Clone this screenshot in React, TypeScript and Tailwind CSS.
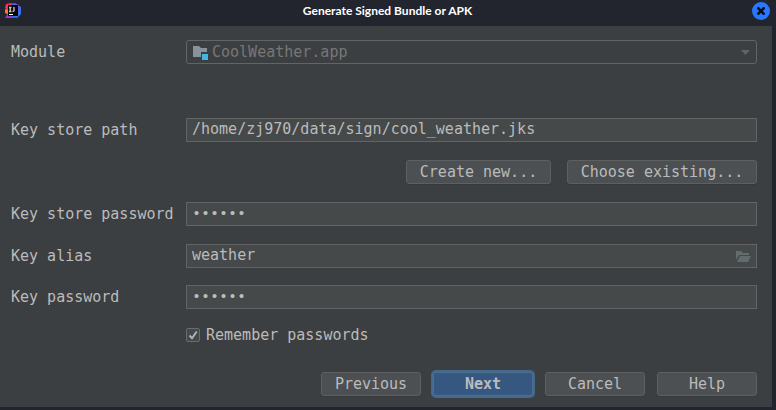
import type { ReactNode } from "react";

const fieldBase =
  "block h-6 w-full border border-[#646464] bg-[#45494a] px-[5px] text-[15px] leading-5 text-[#bbbbbb] outline-none";
const textField = `${fieldBase} pb-[2px]`;
const passwordField = `${fieldBase} font-['Liberation_Mono',monospace]`;

function Row({ id, label, children }: { id: string; label: string; children: ReactNode }) {
  return (
    <>
      <label htmlFor={id} className="text-[15px] leading-6 whitespace-pre">
        {label}
      </label>
      <div className="relative">{children}</div>
    </>
  );
}

function Button({ children, className }: { children: ReactNode; className: string }) {
  return (
    <button
      type="button"
      className={`h-6 rounded-[3px] border border-[#5e6060] bg-[#4c5052] text-[15px] leading-5 shadow-[0_1px_0_#36393b] ${className}`}
    >
      {children}
    </button>
  );
}

function Logo() {
  return (
    <svg className="size-4" viewBox="0 0 16 16" aria-hidden="true">
      <path d="M1 1 6 0 9 2 4 8 0 5Z" fill="#fc2b62" />
      <path d="M0 6 4 7 4 12 0 10Z" fill="#f77a29" />
      <path d="M0 15 3 10 12 14 6 15Z" fill="#9a35c4" />
      <path d="M6 1 10 0 16 4 16 11 12 15 6 14Z" fill="#3572f0" />
      <path d="M8 1 12 1 15 4 14 8Z" fill="#7155dc" />
      <rect x="3" y="2" width="10" height="11" fill="#080808" />
      <path d="M4 4.5h2.5M5.2 4.5v4M4 8.5h2.5M9 4v3.5q0 1-1.5 1" fill="none" stroke="#c4c4c4" strokeWidth="1.4" />
      <path d="M4 11.5h4" stroke="#fff" />
    </svg>
  );
}

export default function App() {
  return (
    <div className="flex min-h-screen flex-col bg-[#22252e] text-[#bbbbbb]">
      <header className="grid h-[26px] grid-cols-[1fr_auto_1fr] items-center pr-[6px] pl-[5px]">
        <div className="pb-1">
          <Logo />
        </div>
        <h1 className="pb-1 font-['Lato','Noto_Sans',sans-serif] text-[12px] leading-4 font-bold text-white">
          Generate Signed Bundle or APK
        </h1>
        <button
          type="button"
          aria-label="Close"
          className="mb-1 flex size-[18px] items-center justify-center justify-self-end rounded-full bg-[#2777ff]"
        >
          <svg className="size-2" viewBox="0 0 8 8" aria-hidden="true">
            <path d="M.5 .5 7.5 7.5M7.5 .5 .5 7.5" stroke="#0b0d14" strokeWidth="2.6" />
          </svg>
        </button>
      </header>

      <form className="mr-1 mb-[3px] flex grow flex-col bg-[#3c3f41] pt-[14px] pr-[15px] pb-[11px] pl-[11px] font-['DejaVu_Sans_Mono',monospace]">
        <div className="grid grid-cols-[175px_1fr]">
          <Row id="module" label="Module">
            <select
              id="module"
              disabled
              className="block h-6 w-full appearance-none rounded-[3px] border border-[#646464] bg-[#3c3f41] pl-[25px] text-[15px] leading-5 text-[#777777] opacity-100"
            >
              <option>CoolWeather.app</option>
            </select>
            <svg className="absolute top-[5px] left-[7px] h-[15px] w-4" viewBox="0 0 16 15" aria-hidden="true">
              <path d="M0 1h6l2 2h6v4H8v5H0Z" fill="#87939a" />
              <path d="M9 9h6v6H9Z" fill="#40b6e0" />
            </svg>
            <svg className="absolute top-[10px] right-[7px] h-[5px] w-[9px]" viewBox="0 0 9 5" aria-hidden="true">
              <path d="M0 0h9L4.5 5Z" fill="#616365" />
            </svg>
          </Row>
        </div>

        <div className="mt-[54px] grid grid-cols-[175px_1fr]">
          <Row id="path" label="Key store path">
            <input id="path" type="text" defaultValue="/home/zj970/data/sign/cool_weather.jks" className={textField} />
          </Row>
        </div>

        <div className="mt-[18px] flex justify-end gap-4">
          <Button className="w-[145px]">Create new...</Button>
          <Button className="w-[190px]">Choose existing...</Button>
        </div>

        <div className="mt-[18px] grid grid-cols-[175px_1fr]">
          <Row id="store-password" label="Key store password">
            <input id="store-password" type="password" defaultValue="secret" className={passwordField} />
          </Row>
        </div>

        <div className="mt-[18px] grid grid-cols-[175px_1fr] gap-y-[17px]">
          <Row id="alias" label="Key alias">
            <input id="alias" type="text" defaultValue="weather" className={textField} />
            <button type="button" aria-label="Browse" className="absolute top-[7px] right-[6px]">
              <svg className="h-[11px] w-[15px]" viewBox="0 0 15 11" aria-hidden="true">
                <path d="M0 0h5l2 2h6v2H3L0 9Z" fill="#646b6f" />
                <path d="M4 5h11l-3 6H1Z" fill="#646b6f" />
              </svg>
            </button>
          </Row>
          <Row id="key-password" label="Key password">
            <input id="key-password" type="password" defaultValue="secret" className={passwordField} />
          </Row>
        </div>

        <div className="mt-4 ml-[175px] flex h-5 items-center gap-[6px]">
          <span className="relative flex">
            <input
              id="remember"
              type="checkbox"
              defaultChecked
              className="peer size-[14px] appearance-none rounded-[2px] border border-[#6b6b6b] bg-[#43494a]"
            />
            <svg
              className="pointer-events-none absolute inset-0 hidden size-[14px] peer-checked:block"
              viewBox="0 0 14 14"
              aria-hidden="true"
            >
              <path d="M3.5 7.5 6 10.2 10.7 3.5" fill="none" stroke="#b2b5b6" strokeWidth="1.9" />
            </svg>
          </span>
          <label htmlFor="remember" className="text-[15px] leading-5">
            Remember passwords
          </label>
        </div>

        <div className="mt-auto flex justify-end gap-3">
          <Button className="w-[100px]">Previous</Button>
          <button
            type="button"
            className="h-6 w-[100px] rounded-[3px] border border-[#4c708c] bg-[#365880] text-[15px] leading-5 font-bold ring-2 ring-[#43698e]"
          >
            Next
          </button>
          <Button className="w-[100px]">Cancel</Button>
          <Button className="w-[100px]">Help</Button>
        </div>
      </form>
    </div>
  );
}
